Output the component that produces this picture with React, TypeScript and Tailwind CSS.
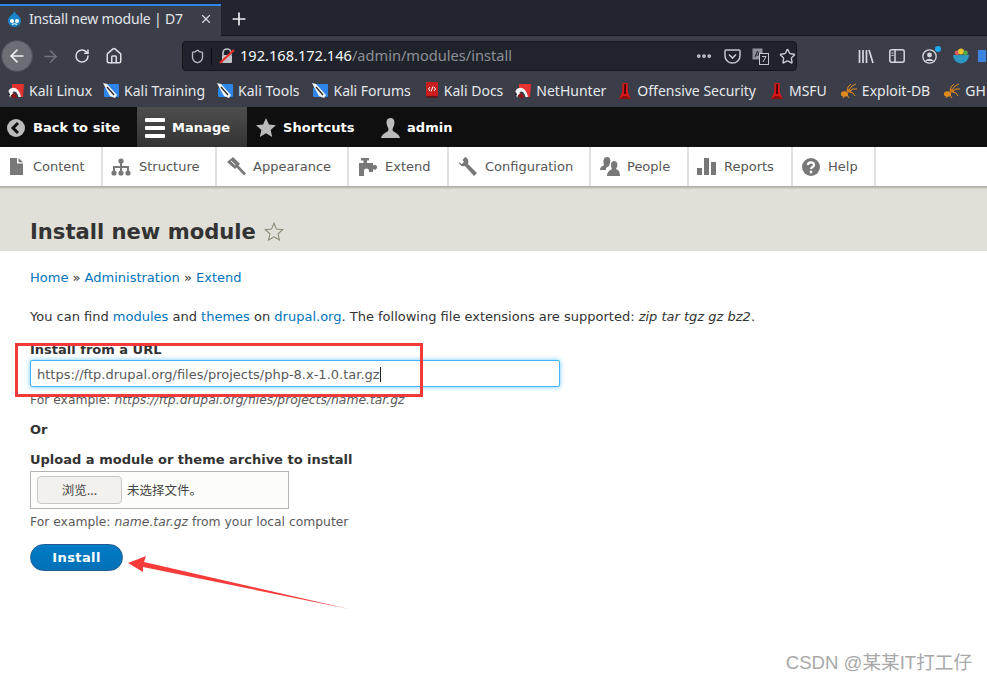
import React from "react";
import { ArrowLeft, ArrowRight, RotateCw, Home, X, Plus, Shield, Star, Ellipsis } from "lucide-react";

const ui = "font-['Noto_Sans','Open_Sans',sans-serif]";
const page = "font-['DejaVu_Sans',sans-serif]";

const KaliDragon = () => (
  <svg width="16" height="16" viewBox="0 0 16 16" className="shrink-0">
    <path d="M4 1 L16 1 L15 14 L12 14 L11 11 C10 8 8 7 6 8 L4 5Z" fill="#e5322f" />
    <path d="M0.5 8 C3 3 11 3 13 14 L10.5 14 C9.5 9 6.5 7.5 4.5 9 L6 12 L3 12 L2 15 Z" fill="#f5f5f5" />
    <path d="M3 13 C4 10 6 9.5 7.5 11 L9 15 L5 15Z" fill="#8a1518" />
    <path d="M1 9 L0 12 L2 12Z" fill="#222" />
  </svg>
);
const KaliBlue = () => (
  <svg width="16" height="16" viewBox="0 0 16 16" className="shrink-0">
    <path d="M4 1 H15 Q16 1 16 2 V13 Q16 14 15 14 H2 Q1 14 1 13 V6Z" fill="#2f86ea" />
    <path d="M0 0 L4 1 L14 12 L12 15 L7 13 L2 4Z" fill="#f4f4f4" />
    <path d="M4 4 L11 12" stroke="#2a2a2a" strokeWidth="1.3" />
  </svg>
);
const KaliDocs = () => (
  <svg width="14" height="17" viewBox="0 0 14 17" className="shrink-0">
    <rect x="1" y="0" width="12" height="16" rx="1" fill="#c81e1e" />
    <rect x="1" y="14" width="12" height="2" fill="#5a1a24" />
    <path d="M5 5 L3.5 7 L5 9 M9 5 L10.5 7 L9 9 M8 4.5 L6 9.5" stroke="#fff" strokeWidth="1" fill="none" />
  </svg>
);
const Tower = () => (
  <svg width="14" height="18" viewBox="0 0 14 18" className="shrink-0">
    <path d="M4.5 1 H9.5 L10 11 L13 17 H1 L4 11Z" fill="#d81818" />
    <path d="M6.2 2 H7.8 V12 H6.2Z" fill="#300" />
    <path d="M1 17 L5 14 H9 L13 17Z" fill="#8e1010" />
  </svg>
);
const Spider = () => (
  <svg width="17" height="16" viewBox="0 0 17 16" className="shrink-0">
    <ellipse cx="4.5" cy="11" rx="3.6" ry="2.8" fill="#e08a1e" />
    <ellipse cx="9" cy="8" rx="2.2" ry="1.7" fill="#c9761a" />
    <path d="M9 7 L12 3 L16 1 M10 8 L13 6 L17 6 M10 9 L13 10 L15 13 M7 8 L8 4 L11 1 M4 13 L3 15 M7 12 L9 15" stroke="#e08a1e" strokeWidth="1" fill="none" />
  </svg>
);

const Bookmark = ({ icon, label, cls }: { icon: React.ReactNode; label: string; cls?: string }) => (
  <div className={`flex items-center gap-[5px] shrink-0 ${cls ?? ""}`}>
    {icon}
    <span className="text-[14px] text-[#e6e8ec] whitespace-nowrap">{label}</span>
  </div>
);

const Drupal = () => (
  <svg width="15" height="16" viewBox="0 0 15 16" className="shrink-0">
    <path d="M7.5 0 C8 3 14 5 14 10 A6.5 6 0 0 1 1 10 C1 5 7 3 7.5 0Z" fill="#1a86c8" />
    <circle cx="5" cy="10" r="2" fill="#fff" />
    <circle cx="10" cy="10" r="2" fill="#fff" />
    <path d="M5 13.5 Q7.5 12 10 13.5" stroke="#fff" strokeWidth="1.2" fill="none" />
  </svg>
);

const Browser = () => (
  <div className={`${ui} h-[107px] flex flex-col shrink-0 overflow-hidden`}>
    <div className="h-[36px] bg-[#22252f] flex items-end border-b border-[#15171d]">
      <div className="w-[221px] h-[32px] bg-[#3b3e49] border-t-2 border-[#2f84e8] flex items-center pl-[7px] pr-[8px] pb-[5px] gap-[7px] -mb-px">
        <Drupal />
        <span className="text-[14px] tracking-[-0.2px] text-[#e3e5ea] whitespace-nowrap flex-1">Install new module | D7</span>
        <X size={14} className="text-[#d8dae0]" strokeWidth={2} />
      </div>
      <div className="w-[36px] h-[35px] flex items-center justify-center pt-[3px]">
        <Plus size={20} className="text-[#f0f0f4]" strokeWidth={2} />
      </div>
    </div>
    <div className="h-[38px] bg-[#3b3e49] flex items-center relative pt-[2px]">
      <div className="w-[32px] h-[32px] ml-px rounded-full bg-[#6c6e76] border border-[#4c4e57] flex items-center justify-center">
        <ArrowLeft size={20} className="text-[#eef0f2]" />
      </div>
      <ArrowRight size={19} className="text-[#72747c] ml-[8px]" />
      <RotateCw size={16} className="text-[#dcdee3] ml-[14px]" strokeWidth={2.2} />
      <Home size={18} className="text-[#dcdee3] ml-[15px]" />
      <div className="ml-[59px] w-[615px] h-[30px] bg-[#20232c] border border-[#14161b] rounded-[4px] flex items-center">
        <Shield size={15} className="text-[#b4b6bc] ml-[7px]" strokeWidth={2.2} />
        <div className="w-px h-[17px] bg-[#0d0e12] ml-[6px]" />
        <svg width="16" height="16" viewBox="0 0 16 16" className="ml-[7px] shrink-0">
          <path d="M4 7 V5 A4 4 0 0 1 12 5 V7" stroke="#c0c2c8" strokeWidth="1.6" fill="none" />
          <rect x="3" y="7" width="10" height="8" rx="1" fill="#c0c2c8" />
          <path d="M1 15 L15 2" stroke="#e8302f" strokeWidth="2.2" />
        </svg>
        <div className="ml-[5px] text-[14.6px] whitespace-nowrap flex-1">
          <span className="text-[#f4f5f7]">192.168.172.146</span>
          <span className="text-[#8d8f96]">/admin/modules/install</span>
        </div>
        <Ellipsis size={18} className="text-[#c4c6cc] mr-[11px]" strokeWidth={3} />
        <svg width="17" height="15" viewBox="0 0 17 15" className="mr-[11px]">
          <path d="M2 1 H15 Q16 1 16 2 V7 A7.5 7 0 0 1 1 7 V2 Q1 1 2 1Z" fill="none" stroke="#c4c6cc" strokeWidth="1.5" />
          <path d="M5 5.5 L8.5 9 L12 5.5" fill="none" stroke="#c4c6cc" strokeWidth="1.6" />
        </svg>
        <svg width="17" height="17" viewBox="0 0 17 17" className="mr-[10px]">
          <rect x="0.5" y="0.5" width="10" height="11" fill="#8f9198" />
          <path d="M3 9 L5.5 3 L8 9 M4 7 H7" stroke="#24262e" strokeWidth="1" fill="none" />
          <rect x="7.5" y="5.5" width="9" height="11" fill="#20232c" stroke="#c4c6cc" />
          <path d="M10 8.5 H14 L11 14" stroke="#c4c6cc" fill="none" />
        </svg>
        <Star size={17} className="text-[#c4c6cc]" strokeWidth={2} />
      </div>
      <svg width="16" height="15" viewBox="0 0 16 15" className="ml-[61px] shrink-0">
        <path d="M1.5 1 V14 M5 1 V14 M8.5 1 V14" stroke="#d6d8de" strokeWidth="1.7" />
        <path d="M11 1 L15 14" stroke="#d6d8de" strokeWidth="1.7" />
      </svg>
      <svg width="16" height="14" viewBox="0 0 16 14" className="ml-[15px] shrink-0">
        <rect x="0.8" y="0.8" width="14.4" height="12.4" rx="2" fill="none" stroke="#d6d8de" strokeWidth="1.5" />
        <path d="M6 1 V13" stroke="#d6d8de" strokeWidth="1.5" />
        <path d="M2.5 4 H4.5 M2.5 6.5 H4.5" stroke="#d6d8de" />
      </svg>
      <div className="relative ml-[17px] w-[15px] h-[15px] shrink-0">
        <svg width="15" height="15" viewBox="0 0 15 15">
          <circle cx="7.5" cy="7.5" r="6.7" fill="none" stroke="#d6d8de" strokeWidth="1.3" />
          <circle cx="7.5" cy="6" r="2.4" fill="#d6d8de" />
          <path d="M3 12 Q7.5 7.5 12 12" fill="#d6d8de" />
        </svg>
        <div className="absolute -top-[3px] -right-[4px] w-[6px] h-[6px] rounded-full bg-[#1eaaf0]" />
      </div>
      <svg width="16" height="16" viewBox="0 0 16 16" className="ml-[16px] shrink-0">
        <path d="M0 7 H16 A8 8.5 0 0 1 0 7Z" fill="#2d97c0" />
        <circle cx="4" cy="5" r="2.4" fill="#d85a5a" />
        <circle cx="8" cy="3.6" r="3" fill="#ecc42c" />
        <circle cx="12.5" cy="5" r="2.4" fill="#58a848" />
      </svg>
      <div className="w-[8px] h-[12px] bg-[#3d82e0] ml-[9px] shrink-0" />
    </div>
    <div className="h-[33px] bg-[#3b3e49] flex items-center pl-[8px] gap-[12px] overflow-hidden">
      <Bookmark icon={<KaliDragon />} label="Kali Linux" />
      <Bookmark icon={<KaliBlue />} label="Kali Training" cls="-ml-px" />
      <Bookmark icon={<KaliBlue />} label="Kali Tools" />
      <Bookmark icon={<KaliBlue />} label="Kali Forums" cls="ml-px" />
      <Bookmark icon={<KaliDocs />} label="Kali Docs" cls="ml-[2px]" />
      <Bookmark icon={<KaliDragon />} label="NetHunter" />
      <Bookmark icon={<Tower />} label="Offensive Security" />
      <Bookmark icon={<Tower />} label="MSFU" cls="ml-[2px]" />
      <Bookmark icon={<Spider />} label="Exploit-DB" cls="ml-px" />
      <Bookmark icon={<Spider />} label="GH" cls="ml-px" />
    </div>
  </div>
);

const grey = "#787878";

const TrayIcon = ({ name }: { name: string }) => {
  const cls = "shrink-0";
  switch (name) {
    case "Content":
      return (
        <svg width="16" height="17" viewBox="0 0 16 17" className={cls}>
          <path d="M1 0 H8 V5.5 H14 V17 H1Z M9.5 0 L14 4.2 H9.5Z" fill={grey} />
        </svg>
      );
    case "Structure":
      return (
        <svg width="20" height="18" viewBox="0 0 20 18" className={cls}>
          <circle cx="10" cy="3" r="2.6" fill={grey} />
          <path d="M9 4 H11 V8 H18 V13 H16 V10 H11 V13 H9 V10 H4 V13 H2 V8 H9Z" fill={grey} />
          <circle cx="3" cy="15" r="2.6" fill={grey} />
          <circle cx="10" cy="15" r="2.6" fill={grey} />
          <circle cx="17" cy="15" r="2.6" fill={grey} />
        </svg>
      );
    case "Appearance":
      return (
        <svg width="20" height="19" viewBox="0 0 20 19" className={cls}>
          <path d="M7 0 L14 7 L9 12 L1 5Z" fill={grey} />
          <path d="M5 4 L9.5 8" stroke="#fff" strokeWidth="1" />
          <path d="M11 9 L19 17.5" stroke={grey} strokeWidth="2.6" />
        </svg>
      );
    case "Extend":
      return (
        <svg width="20" height="18" viewBox="0 0 20 18" className={cls}>
          <path d="M3 0 H11 V2.5 H9 V5 H15 V7.5 A2.4 2.4 0 1 1 15 11 V14 H11 V13 A2.5 2.5 0 1 0 6 13 V18 H1 V5 H5.5 V2.5 H3Z" fill={grey} />
        </svg>
      );
    case "Configuration":
      return (
        <svg width="20" height="20" viewBox="0 0 20 20" className={cls}>
          <path d="M7 0 L4.5 3 L6 5 L3.5 7 L1 5 C1 8 4 10 7 9 L16 19 L19 16 L10 7 C11 4 10 1 7 0Z" fill={grey} />
        </svg>
      );
    case "People":
      return (
        <svg width="21" height="19" viewBox="0 0 21 19" className={cls}>
          <path d="M7 0 C10 0 11 3 10 6 L9 9 L6 11 V13 H0 C0 10 3 9 4 8 C3 5 3 0 7 0Z" fill={grey} />
          <path d="M14 4 C17 4 18 7 17 10 L16 12 C18 13 20 14 20 19 H7 C7 15 10 13 12 12 C10 8 11 4 14 4Z" fill={grey} />
        </svg>
      );
    case "Reports":
      return (
        <svg width="20" height="18" viewBox="0 0 20 18" className={cls}>
          <rect x="0" y="10" width="5" height="7" fill={grey} />
          <rect x="7" y="0" width="5" height="17" fill={grey} />
          <rect x="14" y="4" width="5" height="13" fill={grey} />
        </svg>
      );
    default:
      return (
        <svg width="18" height="18" viewBox="0 0 18 18" className={cls}>
          <circle cx="9" cy="9" r="9" fill={grey} />
          <path d="M6 7 C6 3.5 12 3.5 12 7 C12 9 9 9 9 11" fill="none" stroke="#fff" strokeWidth="2.2" />
          <circle cx="9" cy="14" r="1.4" fill="#fff" />
        </svg>
      );
  }
};

const tray = [
  { n: "Content", w: "w-[103px]", g: "gap-[8px]", p: "pl-[9px]" },
  { n: "Structure", w: "w-[114px]", g: "gap-[8px]", p: "pl-[8px]" },
  { n: "Appearance", w: "w-[132px]", g: "gap-[7px]", p: "pl-[9px]" },
  { n: "Extend", w: "w-[100px]", g: "gap-[7px]", p: "pl-[9px]" },
  { n: "Configuration", w: "w-[142px]", g: "gap-[7px]", p: "pl-[9px]" },
  { n: "People", w: "w-[98px]", g: "gap-[6px]", p: "pl-[9px]" },
  { n: "Reports", w: "w-[104px]", g: "gap-[7px]", p: "pl-[8px]" },
  { n: "Help", w: "w-[83px]", g: "gap-[8px]", p: "pl-[9px]" },
];

const AdminBar = () => (
  <div className="h-[40px] bg-[#0f0f0f] flex items-stretch text-white text-[13px] font-bold tracking-[0.05px] shrink-0">
    <div className="flex items-center gap-[8px] pl-[7px] pt-px w-[137px]">
      <svg width="18" height="18" viewBox="0 0 18 18" className="shrink-0">
        <circle cx="9" cy="9" r="9" fill="#bbb" />
        <path d="M11 4 L6 9 L11 14" fill="none" stroke="#0f0f0f" strokeWidth="3" />
      </svg>
      <span>Back to site</span>
    </div>
    <div className="flex items-center gap-[7px] pl-[8px] pt-px w-[110px] bg-gradient-to-b from-[#4e4e4e] to-[#333333]">
      <div className="flex flex-col gap-[4px] w-[20px]">
        <div className="h-[4px] bg-white rounded-[1px]" />
        <div className="h-[4px] bg-white rounded-[1px]" />
        <div className="h-[4px] bg-white rounded-[1px]" />
      </div>
      <span>Manage</span>
    </div>
    <div className="flex items-center gap-[7px] pl-[9px] pt-px w-[125px]">
      <svg width="20" height="19" viewBox="0 0 24 23" className="shrink-0">
        <path d="M12 0 L15.5 8 L24 8.8 L17.6 14.4 L19.5 23 L12 18.5 L4.5 23 L6.4 14.4 L0 8.8 L8.5 8Z" fill="#bbb" />
      </svg>
      <span>Shortcuts</span>
    </div>
    <div className="flex items-center gap-[7px] pl-[9px] pt-px">
      <svg width="19" height="20" viewBox="0 0 19 20" className="shrink-0">
        <path d="M9.5 0 C13 0 14 3 13.2 6.5 C12.8 8.5 11.5 10 11.5 12 C11.5 14 18 15 19 20 H0 C1 15 7.5 14 7.5 12 C7.5 10 6.2 8.5 5.8 6.5 C5 3 6 0 9.5 0Z" fill="#bbb" />
      </svg>
      <span>admin</span>
    </div>
  </div>
);

const Tray = () => (
  <div className="h-[39px] bg-white flex relative z-10 shrink-0 shadow-[0_1px_0_#b0b0a8,0_2px_0_#bdbdb4,0_3px_0_#cfcfc7]">
    {tray.map((t) => (
      <div key={t.n} className={`${t.w} ${t.p} ${t.g} flex items-center border-r-2 border-[#e0e0dc] text-[13px] text-[#565656] shrink-0`}>
        <TrayIcon name={t.n} />
        <span>{t.n}</span>
      </div>
    ))}
  </div>
);

const Link = ({ children }: { children: React.ReactNode }) => (
  <span className="text-[#0074bd]">{children}</span>
);

const Content = () => (
  <div className={`${page} flex-1 bg-white flex flex-col text-[13px] text-[#333333]`}>
    <div className="h-[65px] bg-[#e0e0d8] flex items-center pl-[30px] pt-[27px] gap-[8px] shrink-0">
      <h1 className="text-[21.1px] font-bold text-[#333333]">Install new module</h1>
      <svg width="20" height="19" viewBox="0 0 24 23" className="shrink-0 -mt-[2px]">
        <path d="M12 1.5 L15 8.6 L22.6 9.3 L16.9 14.3 L18.6 21.8 L12 17.9 L5.4 21.8 L7.1 14.3 L1.4 9.3 L9 8.6Z" fill="none" stroke="#8a8a78" strokeWidth="1.3" />
      </svg>
    </div>
    <div className="pl-[30px] pt-[19px] flex flex-col items-start">
      <div className="leading-[16px]"><Link>Home</Link> » <Link>Administration</Link> » <Link>Extend</Link></div>
      <div className="mt-[23px] leading-[16px]">
        You can find <Link>modules</Link> and <Link>themes</Link> on <Link>drupal.org</Link>. The following file extensions are supported: <em>zip tar tgz gz bz2</em>.
      </div>
      <div className="mt-[17px] leading-[16px] font-bold">Install from a URL</div>
      <div className="mt-[2px] w-[530px] h-[27px] bg-white border border-[#40b6ff] rounded-[2px] shadow-[0_0_5px_rgba(64,182,255,0.75)] flex items-center pl-[6px] pt-px text-[13px] text-[#595959] leading-none">
        <span>https://ftp.drupal.org/files/projects/php-8.x-1.0.tar.gz</span>
        <span className="w-px h-[15px] bg-[#222]" />
      </div>
      <div className="mt-[5px] leading-[16px] text-[12.35px] text-[#595959]">For example: <em>https://ftp.drupal.org/files/projects/name.tar.gz</em></div>
      <div className="mt-[14px] leading-[16px] font-bold">Or</div>
      <div className="mt-[14px] leading-[16px] font-bold">Upload a module or theme archive to install</div>
      <div className="mt-[3px] w-[259px] h-[38px] bg-[#fcfcfa] border border-[#b4b4b0] flex items-center pl-[6px] gap-[5px] font-['Noto_Sans_CJK_SC','DejaVu_Sans',sans-serif]">
        <div className="w-[85px] h-[28px] bg-[#f2f1ed] border border-[#c9c8c2] rounded-[4px] flex items-center justify-center text-[12.5px] text-[#444]">浏览...</div>
        <span className="text-[12.5px] text-[#444]">未选择文件。</span>
      </div>
      <div className="mt-[5px] leading-[16px] text-[12.35px] text-[#595959]">For example: <em>name.tar.gz</em> from your local computer</div>
      <button className="mt-[14px] w-[93px] h-[27px] rounded-full bg-gradient-to-b from-[#007bc6] to-[#0071b8] border border-[#1e5c90] text-white text-[13px] font-bold tracking-[0.4px]">Install</button>
    </div>
  </div>
);

export default function App() {
  return (
    <div className="relative w-[987px] h-[682px] overflow-hidden flex flex-col bg-white">
      <Browser />
      <div className={`${page} relative z-10`}>
        <AdminBar />
        <Tray />
      </div>
      <Content />
      <div className="absolute z-20 left-[15px] top-[343px] w-[408px] h-[54px] border-[3px] border-[#f23a3a] pointer-events-none" />
      <svg className="absolute z-20 left-[125px] top-[550px] pointer-events-none" width="230" height="65" viewBox="0 0 230 65">
        <path d="M3 13 L21 6 L19 12 L224 59 L18 17 L18 22Z" fill="#f73b3b" />
      </svg>
      <div className="absolute z-20 right-[15px] top-[651px] text-[18.6px] leading-[24px] text-[#a8a8a8] font-['Liberation_Sans','Noto_Sans_CJK_SC',sans-serif] whitespace-nowrap">CSDN @某某IT打工仔</div>
    </div>
  );
}
